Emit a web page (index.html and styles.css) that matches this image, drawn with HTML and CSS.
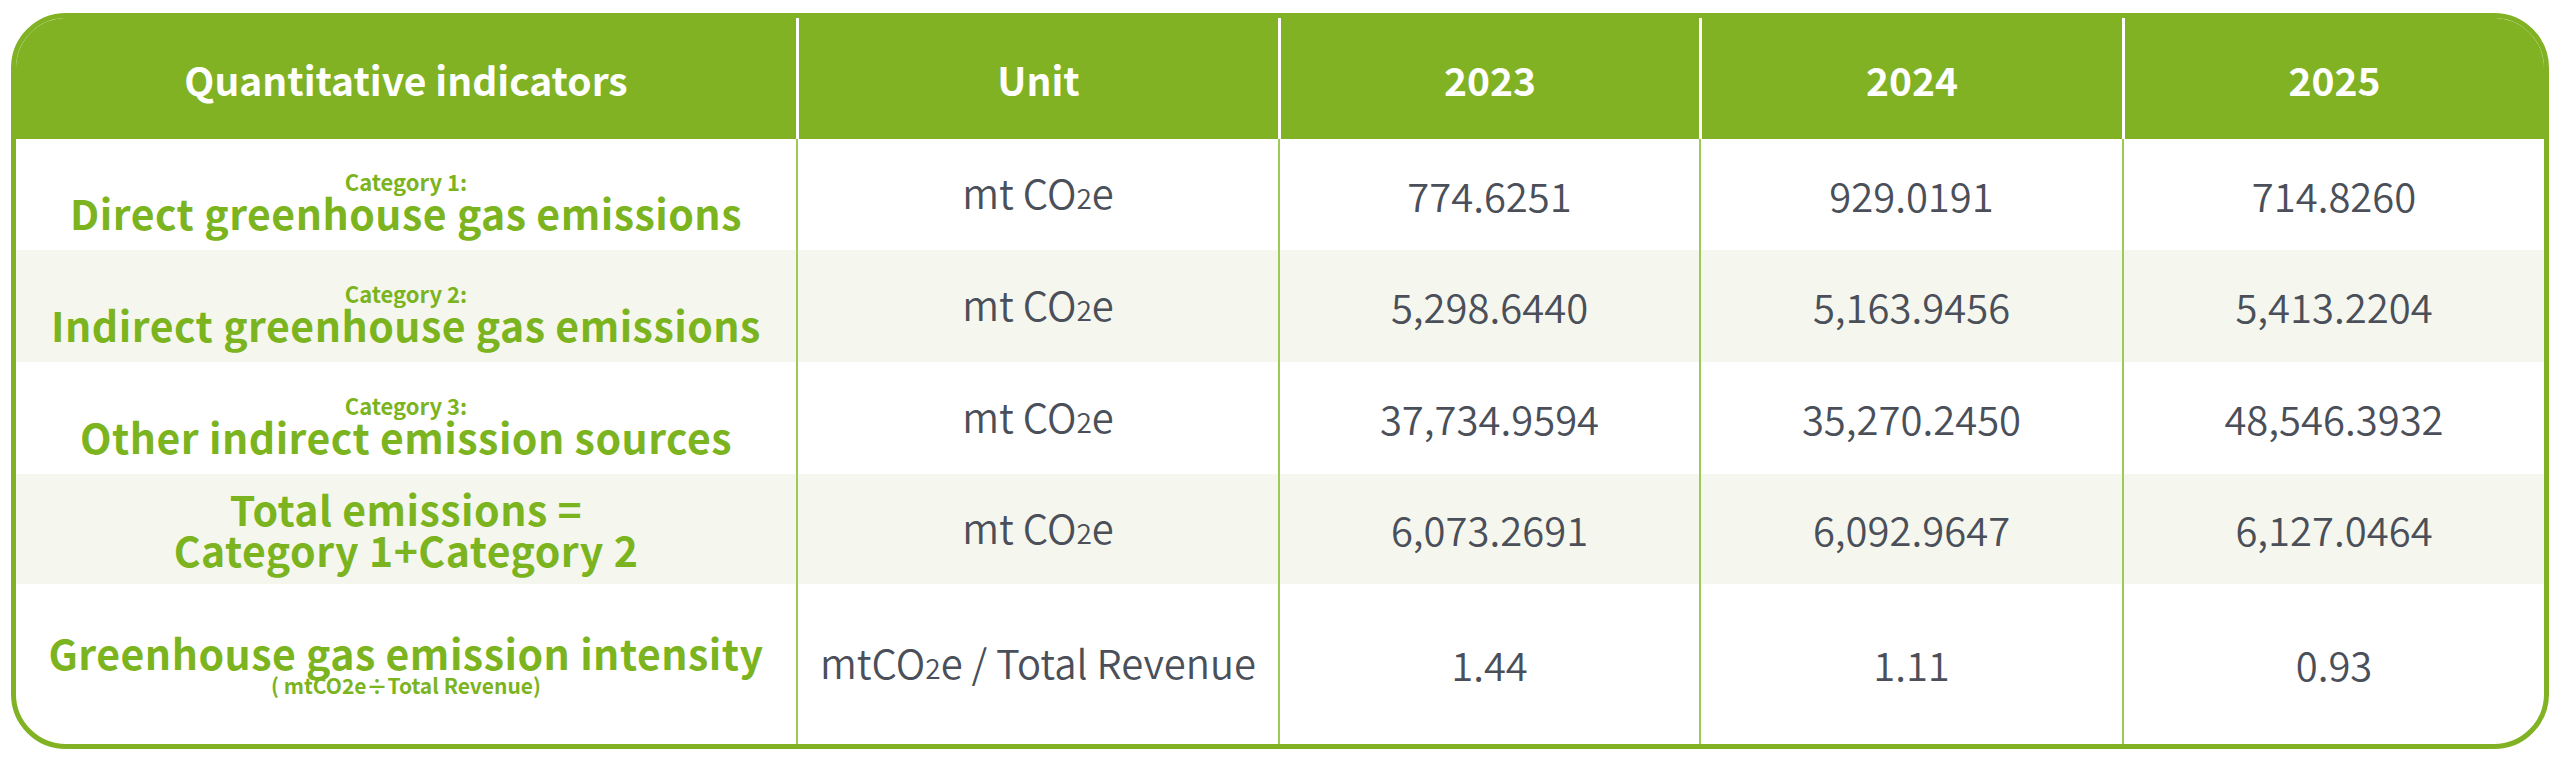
FILE: index.html
```html
<!DOCTYPE html>
<html lang="en">
<head>
<meta charset="utf-8">
<title>GHG Quantitative indicators</title>
<link rel="stylesheet" href="styles.css">
</head>
<body>
<div class="page">
  <div class="frame">
    <table class="ghg">
      <colgroup>
        <col class="c-ind"><col class="c-unit"><col class="c-y1"><col class="c-y2"><col class="c-y3">
      </colgroup>
      <thead>
        <tr>
          <th>Quantitative indicators</th>
          <th>Unit</th>
          <th>2023</th>
          <th>2024</th>
          <th>2025</th>
        </tr>
      </thead>
      <tbody>
        <tr class="r1">
          <td class="label cat-row"><div class="cat">Category 1:</div><div class="name">Direct greenhouse gas emissions</div></td>
          <td>mt CO<span class="sub">2</span>e</td>
          <td>774.6251</td>
          <td>929.0191</td>
          <td>714.8260</td>
        </tr>
        <tr class="r2 alt">
          <td class="label cat-row"><div class="cat">Category 2:</div><div class="name">Indirect greenhouse gas emissions</div></td>
          <td>mt CO<span class="sub">2</span>e</td>
          <td>5,298.6440</td>
          <td>5,163.9456</td>
          <td>5,413.2204</td>
        </tr>
        <tr class="r3">
          <td class="label cat-row"><div class="cat">Category 3:</div><div class="name">Other indirect emission sources</div></td>
          <td>mt CO<span class="sub">2</span>e</td>
          <td>37,734.9594</td>
          <td>35,270.2450</td>
          <td>48,546.3932</td>
        </tr>
        <tr class="r4 alt">
          <td class="label"><div class="name">Total emissions =</div><div class="name">Category 1+Category 2</div></td>
          <td>mt CO<span class="sub">2</span>e</td>
          <td>6,073.2691</td>
          <td>6,092.9647</td>
          <td>6,127.0464</td>
        </tr>
        <tr class="r5">
          <td class="label"><div class="name">Greenhouse gas emission intensity</div><div class="note">( mtCO2e÷Total Revenue)</div></td>
          <td>mtCO<span class="sub">2</span>e / Total Revenue</td>
          <td>1.44</td>
          <td>1.11</td>
          <td>0.93</td>
        </tr>
      </tbody>
    </table>
  </div>
</div>
</body>
</html>
```

FILE: styles.css
```css
html, body {
  margin: 0;
  padding: 0;
  background: #ffffff;
}

.page {
  padding: 13px 11px 0 11px;
}

.frame {
  width: 2538px;
  box-sizing: border-box;
  border: 5px solid #80b224;
  border-radius: 55px;
  overflow: hidden;
  background: #ffffff;
}

.ghg {
  width: 2528px;
  table-layout: fixed;
  border-collapse: separate;
  border-spacing: 0;
  font-family: "Noto Sans CJK TC", "Source Sans Pro", "Open Sans", sans-serif;
}

.c-ind { width: 780px; }
.c-unit { width: 482px; }
.c-y1 { width: 421px; }
.c-y2 { width: 423px; }
.c-y3 { width: 422px; }

.ghg th {
  height: 121px;
  padding: 0;
  background: #80b224;
  color: #ffffff;
  font-size: 39px;
  font-weight: 700;
  line-height: 44px;
  text-align: center;
  vertical-align: middle;
}

.ghg th + th {
  border-left: 3px solid #ffffff;
}

.ghg td {
  padding: 0;
  text-align: center;
  vertical-align: middle;
  color: #4a4f59;
  font-size: 40px;
  font-weight: 350;
  line-height: 44px;
}

.ghg td + td {
  border-left: 2px solid #9dca55;
}

.ghg tr.alt td {
  background: #f5f7ee;
}

.r1 td { height: 111px; }
.r2 td { height: 112px; }
.r3 td { height: 112px; }
.r4 td { height: 110px; }
.r5 td { height: 160px; }

.sub {
  font-size: 28px;
}

.label {
  color: #7bb41e;
}

.ghg td.cat-row {
  padding-top: 14px;
  box-sizing: border-box;
}

.label .cat {
  color: #7bb41e;
  font-size: 22px;
  font-weight: 700;
  line-height: 22px;
}

.label .name {
  color: #7bb41e;
  font-size: 41px;
  font-weight: 700;
  line-height: 41px;
  letter-spacing: 0.5px;
}

.label .note {
  color: #7bb41e;
  font-size: 21px;
  font-weight: 700;
  line-height: 24px;
}
```
